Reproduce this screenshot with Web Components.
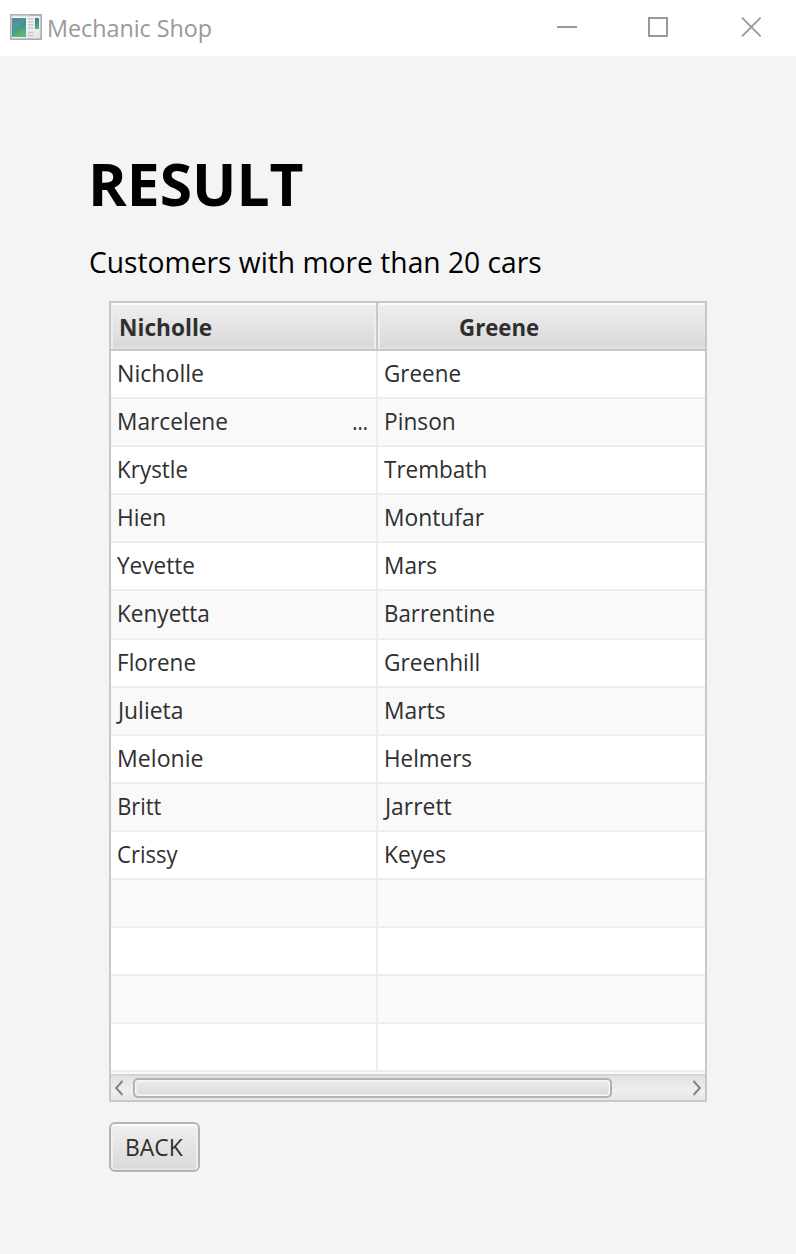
<!DOCTYPE html>
<html lang="en">
<head>
<meta charset="utf-8">
<title>Mechanic Shop</title>
<style>
html, body { margin: 0; height: 100%; background: #f4f4f4; }
body { font-family: "Open Sans", "Noto Sans", sans-serif; color: #2f2f2f; overflow: hidden; }
</style>
</head>
<body>
<shop-window>
  <title-bar slot="bar"><fit-text ink="162.5" size="23.2">Mechanic Shop</fit-text></title-bar>
  <fit-text slot="heading" ink="210" size="59" weight="700">RESULT</fit-text>
  <fit-text slot="subtitle" ink="451.5" size="29">Customers with more than 20 cars</fit-text>
  <result-table slot="content"></result-table>
  <push-button slot="content"><fit-text ink="57" size="23.4">BACK</fit-text></push-button>
</shop-window>

<script>
const pen = document.createElement('canvas').getContext('2d');

// A single-line label whose glyphs span exactly the requested width.
class FitText extends HTMLElement {
  connectedCallback() {
    if (this.shadowRoot) return;
    const ink = +this.getAttribute('ink');
    const size = +this.getAttribute('size');
    const weight = this.getAttribute('weight') || 400;
    const root = this.attachShadow({ mode: 'open' });
    pen.font = `${weight} ${size}px "Open Sans", "Noto Sans", sans-serif`;
    const m = pen.measureText(this.textContent);
    const scale = (ink - .6) / (m.actualBoundingBoxRight + m.actualBoundingBoxLeft);
    root.innerHTML = `<style>
      :host { display: block; flex: none; width: ${ink}px; white-space: nowrap;
        font-size: ${size}px; font-weight: ${weight}; }
      span { display: inline-block; transform-origin: 0 50%;
        transform: translateX(${m.actualBoundingBoxLeft * scale}px) scaleX(${scale}); }
    </style><span><slot></slot></span>`;
  }
}
customElements.define('fit-text', FitText);

class TitleBar extends HTMLElement {
  constructor() {
    super();
    this.attachShadow({ mode: 'open' }).innerHTML = `<style>
      :host { display: flex; height: 56px; background: #fff; color: #999; line-height: 56px; }
      .icon { margin: 13px 7px 0 10px; flex: none; }
      .controls { display: flex; gap: 71px; margin: 17px 34px 0 auto; }
      svg { display: block; }
    </style>
    <svg class="icon" width="32" height="28" viewBox="0 0 32 28">
      <defs>
        <linearGradient id="g" x1="0" y1="0" x2=".35" y2="1"><stop offset="0" stop-color="#3f719f"/><stop offset=".5" stop-color="#3d918b"/><stop offset="1" stop-color="#5cb575"/></linearGradient>
        <linearGradient id="p" x1="0" y1="0" x2="1" y2="1"><stop offset="0" stop-color="#fff"/><stop offset="1" stop-color="#e2e3e5"/></linearGradient>
      </defs>
      <rect x=".8" y="1.8" width="30.4" height="24.4" fill="url(#p)" stroke="#a9acb3" stroke-width="1.6"/>
      <path d="M2 2.5h28" stroke="#c3c7d2" stroke-width="1.6"/>
      <path d="M21 2.2h9" stroke="#8d93a1" stroke-dasharray="2 1"/>
      <rect x="2" y="5" width="14" height="19" fill="url(#g)"/>
      <path d="M2 16Q11 15 16 6V5H2z" fill="#fff" opacity=".1"/>
      <path d="M18 6h5.500M18 9h5.500M18 12h5.500M18 15h5.500M18 19.500h5.500M18 22.500h5.500" stroke="#c9cacc" stroke-width="1.3"/>
      <rect x="25" y="5" width="4" height="11" fill="url(#g)"/>
    </svg>
    <slot></slot>
    <div class="controls">
      <svg width="20" height="20"><path d="M0 10h20" stroke="#999" stroke-width="2"/></svg>
      <svg width="20" height="20"><path d="M1 1h18v18H1z" fill="none" stroke="#999" stroke-width="2"/></svg>
      <svg width="23" height="20" viewBox="-2 0 23 20"><path d="M1 .7l18.600 18.600M19.600 .7L1 19.300" stroke="#999" stroke-width="1.900"/></svg>
    </div>`;
  }
}
customElements.define('title-bar', TitleBar);

class ShopWindow extends HTMLElement {
  constructor() {
    super();
    this.attachShadow({ mode: 'open' }).innerHTML = `<style>
      :host { display: block; height: 1254px; }
      header { color: #000; padding: 87px 0 0 90px; }
      ::slotted([slot="heading"]) { line-height: 80px; margin-left: 3px; }
      ::slotted([slot="subtitle"]) { line-height: 40px; margin-top: 19px; }
      main { display: flex; flex-direction: column; align-items: flex-start; gap: 20px; padding: 19px 0 0 109px; }
    </style>
    <slot name="bar"></slot>
    <header><slot name="heading"></slot><slot name="subtitle"></slot></header>
    <main><slot name="content"></slot></main>`;
  }
}
customElements.define('shop-window', ShopWindow);

class ScrollStrip extends HTMLElement {
  constructor() {
    super();
    this.attachShadow({ mode: 'open' }).innerHTML = `<style>
      :host { display: flex; align-items: center; box-sizing: border-box; height: 26px; padding: 0 4px;
        border-top: 2px solid #d5d5d5; background: linear-gradient(#e1e1e1, #efefef 60%, #e6e6e6); }
      .thumb { box-sizing: border-box; width: 479px; height: 20px; margin: 0 auto 0 10px; border: 2px solid #b2b2b2;
        border-radius: 5px; background: linear-gradient(#ededed, #dadada); box-shadow: inset 0 0 0 1.500px #f7f7f7; }
      svg { display: block; }
    </style>
    <svg width="8" height="16"><path d="M7.500 1L1.200 8l6.300 7" fill="none" stroke="#858585" stroke-width="2"/></svg>
    <div class="thumb"></div>
    <svg width="8" height="16"><path d="M.5 1l6.300 7L.5 15" fill="none" stroke="#858585" stroke-width="2"/></svg>`;
  }
}
customElements.define('scroll-strip', ScrollStrip);

// Each entry: text, left inset in its cell, glyph width.
const rows = [
  [['Nicholle', 7.500, 84.500], ['Greene', 7, 75.500]],
  [['Marcelene', 7.500, 108.500], ['Pinson', 7.800, 69]],
  [['Krystle', 7.500, 68.500], ['Trembath', 6, 102.500]],
  [['Hien', 7.500, 46.500], ['Montufar', 7.500, 99]],
  [['Yevette', 6.300, 77.500], ['Mars', 7.500, 51.500]],
  [['Kenyetta', 7.500, 90.500], ['Barrentine', 7.500, 108.500]],
  [['Florene', 7.500, 76.500], ['Greenhill', 7, 94]],
  [['Julieta', 4.800, 67], ['Marts', 7.500, 60]],
  [['Melonie', 7.500, 84], ['Helmers', 7.500, 86.500]],
  [['Britt', 7.500, 42.500], ['Jarrett', 4.800, 69]],
  [['Crissy', 6.700, 60.500], ['Keyes', 7.500, 60.500]],
  [], [], [], []
];

class ResultTable extends HTMLElement {
  constructor() {
    super();
    const cell = c => c
      ? `<fit-text style="margin-left:${c[1]}px" ink="${c[2]}" size="23.4">${c[0]}</fit-text>` : '';
    const body = rows.map(([a, b], i) => `<div class="row">
      <div class="cell">${cell(a)}${i === 1 ? '<fit-text class="more" ink="14.5" size="23.4">...</fit-text>' : ''}</div>
      <div class="cell">${cell(b)}</div></div>`).join('');
    this.attachShadow({ mode: 'open' }).innerHTML = `<style>
      :host { display: block; box-sizing: border-box; width: 598px; height: 801px; border: 2px solid #c8c8c8; background: #f9f9f9; }
      .head, .row { display: grid; grid-template-columns: 267px 327px; }
      .head { height: 48px; line-height: 44px; }
      .head > div { box-sizing: border-box; height: 48px; padding-top: 2px; border-bottom: 2px solid #c8c8c8; display: flex;
        background: linear-gradient(#efefef, #d8d8d8);
        box-shadow: inset 2px 0 #ededed, inset 0 2px #fbfbfb, inset 0 -2px #e1e1e1; }
      .head > div:first-child { border-right: 2px solid #c8c8c8; padding-left: 9.500px;
        box-shadow: inset 0 2px #fbfbfb, inset 2px 0 #ededed, inset -2px 0 #ededed, inset 0 -2px #e1e1e1; }
      .head > div:last-child { padding-left: 81.500px; }
      .body { display: grid; grid-template-rows: repeat(5, 48px) 49px repeat(9, 48px); line-height: 44px; }
      .row { background: #fff; }
      .row:nth-child(even) { background: #f9f9f9; }
      .row:nth-child(6) { line-height: 45px; }
      .cell { box-sizing: border-box; display: flex; border-bottom: 2px solid #ededed; }
      .cell:first-child { border-right: 2px solid #ededed; }
      .more { margin: 0 8.500px 0 auto; }
      scroll-strip { margin-top: 2px; }
    </style>
    <div class="head"><div><fit-text ink="91" size="23.4" weight="700">Nicholle</fit-text></div><div><fit-text ink="79" size="23.4" weight="700">Greene</fit-text></div></div>
    <div class="body">${body}</div>
    <scroll-strip></scroll-strip>`;
  }
}
customElements.define('result-table', ResultTable);

class PushButton extends HTMLElement {
  constructor() {
    super();
    this.attachShadow({ mode: 'open' }).innerHTML = `<style>
      :host { display: block; }
      button { all: unset; box-sizing: border-box; display: flex; width: 91px; height: 50px; padding-left: 15.500px;
        line-height: 46px; border: 2px solid #b4b4b4; border-radius: 6px;
        background: linear-gradient(#f0f0f0, #d9d9d9);
        box-shadow: inset 0 2px #fbfbfb, inset 2px 0 #eee, inset -2px 0 #eee, inset 0 -2px #e1e1e1, 0 2px #f9f9f9; }
    </style><button type="button"><slot></slot></button>`;
  }
}
customElements.define('push-button', PushButton);
</script>
</body>
</html>
